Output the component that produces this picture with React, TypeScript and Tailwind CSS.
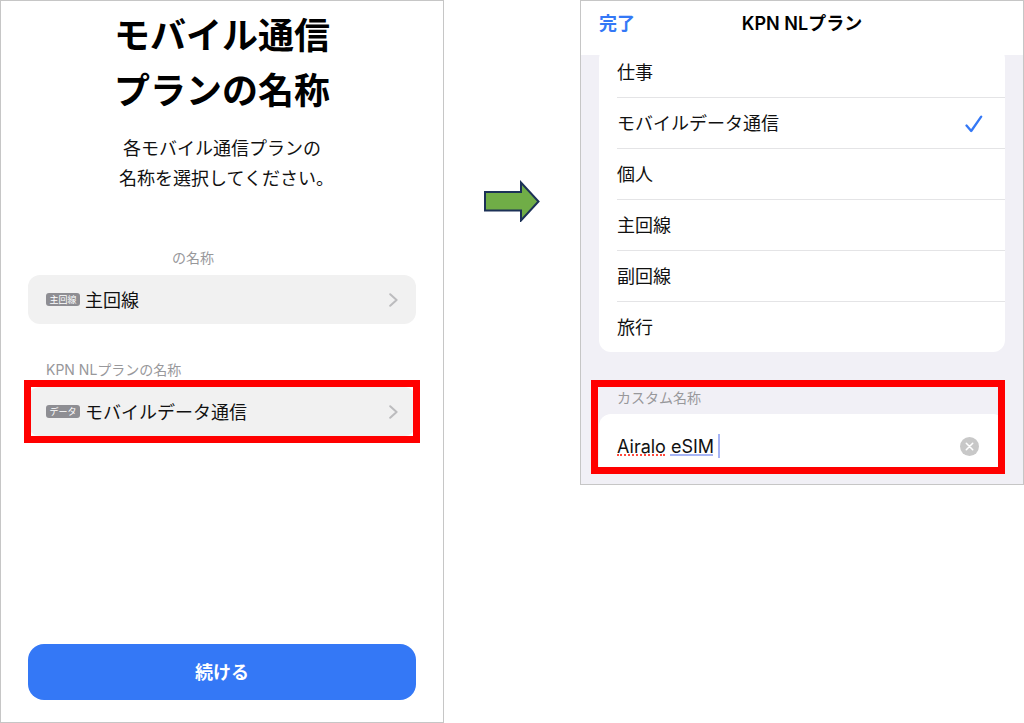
import { useState } from 'react';

const planLabels = ['仕事', 'モバイルデータ通信', '個人', '主回線', '副回線', '旅行'];

export default function App() {
  return (
    <main className="grid min-h-screen grid-cols-[444fr_136fr_444fr] items-start bg-white font-['Inter','Noto_Sans_CJK_JP',sans-serif] text-lg text-[#111111]">
      <PlanNameScreen />
      <div className="flex justify-center pt-[180px]">
        <StepArrow />
      </div>
      <LabelPickerScreen />
    </main>
  );
}

function PlanNameScreen() {
  return (
    <section className="flex min-h-screen flex-col border border-[#c6c6c6] px-[27px] pt-2 pb-[22px]">
      <h1 className="text-center text-4xl leading-[55px] font-bold text-black">
        モバイル通信
        <br />
        プランの名称
      </h1>
      <p className="mt-[15px] text-center leading-[30px]">
        各モバイル通信プランの
        <br />
        名称を選択してください<span className="[font-feature-settings:'halt']">。</span>
      </p>
      <div className="mt-[54px] flex flex-col gap-9">
        <div>
          <h2 className="mb-[7px] pl-36 text-sm leading-5 text-[#98989b]">の名称</h2>
          <PlanRow badge="主回線" name="主回線" />
        </div>
        <div>
          <h2 className="mb-[7px] pl-[18px] text-sm leading-5 text-[#98989b]">KPN NLプランの名称</h2>
          <div className="relative">
            <PlanRow badge="データ" name="モバイルデータ通信" />
            <div className="pointer-events-none absolute -inset-x-1 -inset-y-[7px] border-[7px] border-[#ff0000]" />
          </div>
        </div>
      </div>
      <button
        type="button"
        className="mt-auto h-14 w-full rounded-2xl bg-[#3478f6] pt-0.5 font-bold text-white"
      >
        続ける
      </button>
    </section>
  );
}

function PlanRow({ badge, name }: { badge: string; name: string }) {
  return (
    <button
      type="button"
      className="flex h-[49px] w-full items-center rounded-xl bg-[#f1f1f1] px-[18px] text-left"
    >
      <span className="mr-[5px] flex h-[13px] w-[34px] items-center justify-center rounded-[3px] bg-[#8e8e93] text-[9px] leading-3 text-white">
        {badge}
      </span>
      <span className="flex-1 pt-0.5">{name}</span>
      <svg className="h-3.5 w-[9px]" viewBox="0 0 9 14" fill="none" stroke="#bcbcbe" strokeWidth="2" strokeLinecap="round" strokeLinejoin="round">
        <path d="M1.2 1.2 7.6 7l-6.4 5.8" />
      </svg>
    </button>
  );
}

function StepArrow() {
  return (
    <svg className="h-[42px] w-[58px]" viewBox="0 0 58 42" fill="#70ad47" stroke="#1c3157" strokeWidth="2">
      <path d="M2 12H38V2.5L55.500 21.5 38 40.500V30.500H2Z" />
    </svg>
  );
}

function LabelPickerScreen() {
  const [selected, setSelected] = useState('モバイルデータ通信');
  const [custom, setCustom] = useState('Airalo eSIM ');
  return (
    <section className="border border-[#c6c6c6] bg-[#f1f0f6] pb-2.5">
      <header className="grid h-[54px] grid-cols-[1fr_auto_1fr] items-start bg-white px-[18px] pt-2">
        <button type="button" className="justify-self-start leading-[30px] font-bold text-[#3478f6]">
          完了
        </button>
        <h2 className="leading-[30px] font-semibold text-black">KPN NLプラン</h2>
      </header>
      <div className="overflow-hidden px-[18px]">
        <div role="radiogroup" aria-label="名称" className="-mt-2 rounded-xl bg-white pl-[18px]">
          {planLabels.map((label) => (
            <label
              key={label}
              className="relative flex h-[51px] items-center justify-between border-b border-[#e4e4e6] pt-0.5 pr-[22px] last:h-[50px] last:border-b-0"
            >
              <input
                type="radio"
                name="plan-label"
                className="peer sr-only"
                checked={selected === label}
                onChange={() => setSelected(label)}
              />
              <span>{label}</span>
              <svg className="invisible h-[18px] w-[18px] peer-checked:visible" viewBox="0 0 18 18" fill="none" stroke="#3478f6" strokeWidth="2.300" strokeLinecap="round" strokeLinejoin="round">
                <path d="M1.500 10.500 6.200 16 16.200 1.600" />
              </svg>
            </label>
          ))}
        </div>
      </div>
      <div className="relative mx-[18px] mt-7 pt-2">
        <label htmlFor="custom-name" className="mb-1.5 block pl-[18px] text-sm leading-5 text-[#98989b]">
          カスタム名称
        </label>
        <div className="flex h-[60px] items-center rounded-t-xl bg-white pt-1 pr-[26px] pl-[18px]">
          <div className="relative flex-1">
            <input
              id="custom-name"
              type="text"
              value={custom}
              onChange={(e) => setCustom(e.target.value)}
              className="block h-8 w-full outline-none"
            />
            {custom === 'Airalo eSIM ' && (
              <>
                <span className="absolute bottom-1.5 left-0 w-12 border-b-2 border-dotted border-[#ff4a3d]" />
                <span className="absolute bottom-1.5 left-[53px] w-[43px] border-b-2 border-[#a6b4f5]" />
                <span className="absolute top-1 left-[101px] h-6 w-0.5 bg-[#a6b4f5]" />
              </>
            )}
          </div>
          <button type="button" aria-label="消去" onClick={() => setCustom('')}>
            <svg className="h-[19px] w-[19px]" viewBox="0 0 19 19" fill="none">
              <circle cx="9.5" cy="9.5" r="9.5" fill="#c8c8c8" />
              <path d="m6.300 6.300 6.400 6.400m0-6.400-6.400 6.400" stroke="#ffffff" strokeWidth="1.600" strokeLinecap="round" />
            </svg>
          </button>
        </div>
        <div className="pointer-events-none absolute inset-y-0 right-0 -left-2 border-[7px] border-[#ff0000]" />
      </div>
    </section>
  );
}
